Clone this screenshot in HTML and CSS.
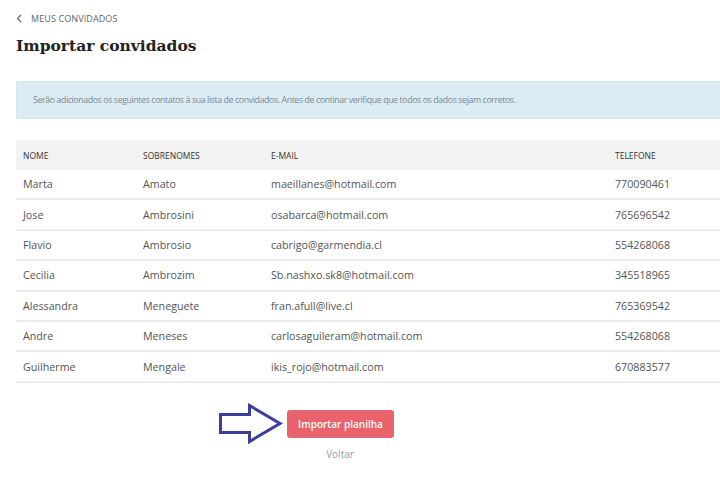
FILE: index.html
```html
<!DOCTYPE html>
<html lang="pt">
<head>
    <meta charset="UTF-8">
    <meta name="viewport" content="width=device-width, initial-scale=1.0">
    <title>Importar convidados</title>
    <link rel="stylesheet" href="styles.css">
</head>
<body>

<div class="page">
    <a class="back-link" href="#">
        <svg width="6" height="9" viewBox="0 0 6 9"><path d="M5 1 L1.5 4.5 L5 8" fill="none" stroke="#666" stroke-width="1.2"/></svg>
        MEUS CONVIDADOS
    </a>
    <h1>Importar convidados</h1>

    <div class="info-box">
        Serão adicionados os seguintes contatos à sua lista de convidados. Antes de continar verifique que todos os dados sejam corretos.
    </div>

    <table class="guests">
        <thead>
        <tr>
            <th class="col-name">NOME</th>
            <th class="col-surname">SOBRENOMES</th>
            <th class="col-email">E-MAIL</th>
            <th>TELEFONE</th>
        </tr>
        </thead>
        <tbody>
        <tr><td>Marta</td><td>Amato</td><td>maeillanes@hotmail.com</td><td>770090461</td></tr>
        <tr><td>Jose</td><td>Ambrosini</td><td>osabarca@hotmail.com</td><td>765696542</td></tr>
        <tr><td>Flavio</td><td>Ambrosio</td><td>cabrigo@garmendia.cl</td><td>554268068</td></tr>
        <tr><td>Cecilia</td><td>Ambrozim</td><td>Sb.nashxo.sk8@hotmail.com</td><td>345518965</td></tr>
        <tr><td>Alessandra</td><td>Meneguete</td><td>fran.afull@live.cl</td><td>765369542</td></tr>
        <tr><td>Andre</td><td>Meneses</td><td>carlosaguileram@hotmail.com</td><td>554268068</td></tr>
        <tr><td>Guilherme</td><td>Mengale</td><td>ikis_rojo@hotmail.com</td><td>670883577</td></tr>
        </tbody>
    </table>

    <div class="actions">
        <div class="button-row">
            <svg class="arrow" width="66" height="42" viewBox="0 0 66 42">
                <path d="M2.5 11.5 H31.5 V2.5 L62 20.5 L31.5 38.5 V29.5 H2.5 Z" fill="#fff" stroke="#3a3f9c" stroke-width="3" stroke-linejoin="miter"/>
            </svg>
            <button class="import-button">Importar planilha</button>
        </div>
        <a class="back-button" href="#">Voltar</a>
    </div>
</div>

</body>
</html>
```

FILE: styles.css
```css
body {
    font-family: "Open Sans", sans-serif;
    margin: 0;
    overflow: hidden;
    background-color: #fff;
    color: #555;
}
.page {
    width: 780px;
    padding: 12px 0 0 16px;
}
.back-link {
    display: flex;
    align-items: center;
    gap: 9px;
    font-size: 9px;
    color: #666;
    text-decoration: none;
    letter-spacing: 0.1px;
}
h1 {
    font-family: "DejaVu Serif", serif;
    font-size: 15.5px;
    font-weight: bold;
    color: #222;
    margin: 11px 0 0 0;
}
.info-box {
    margin-top: 26px;
    background-color: #dcecf4;
    border: 1px solid #d2e6f0;
    color: #7d8a93;
    font-size: 8.8px;
    letter-spacing: -0.4px;
    padding: 12px 16px 12px 16px;
}
.guests {
    width: 100%;
    border-collapse: collapse;
    margin-top: 21px;
    font-size: 10.7px;
}
.guests th {
    background-color: #f2f2f2;
    color: #333;
    font-size: 8.5px;
    font-weight: normal;
    text-align: left;
    height: 30px;
    padding: 0 7px;
}
.guests td {
    height: 28.4px;
    padding: 0 7px;
    border-bottom: 2px solid #ececec;
    color: #555;
}
.col-name {
    width: 106px;
}
.col-surname {
    width: 114px;
}
.col-email {
    width: 330px;
}
.actions {
    width: 648px;
    display: flex;
    flex-direction: column;
    align-items: center;
    padding-top: 20px;
}
.button-row {
    display: flex;
    align-items: center;
    gap: 3px;
    margin-left: -68px;
}
.import-button {
    background-color: #e9636c;
    color: #fff;
    border: none;
    border-radius: 3px;
    font-family: "Open Sans", sans-serif;
    font-size: 10px;
    font-weight: 600;
    padding: 7px 11px;
    height: 28px;
}
.back-button {
    margin-top: 2px;
    font-size: 10px;
    color: #999;
    text-decoration: none;
}
```
